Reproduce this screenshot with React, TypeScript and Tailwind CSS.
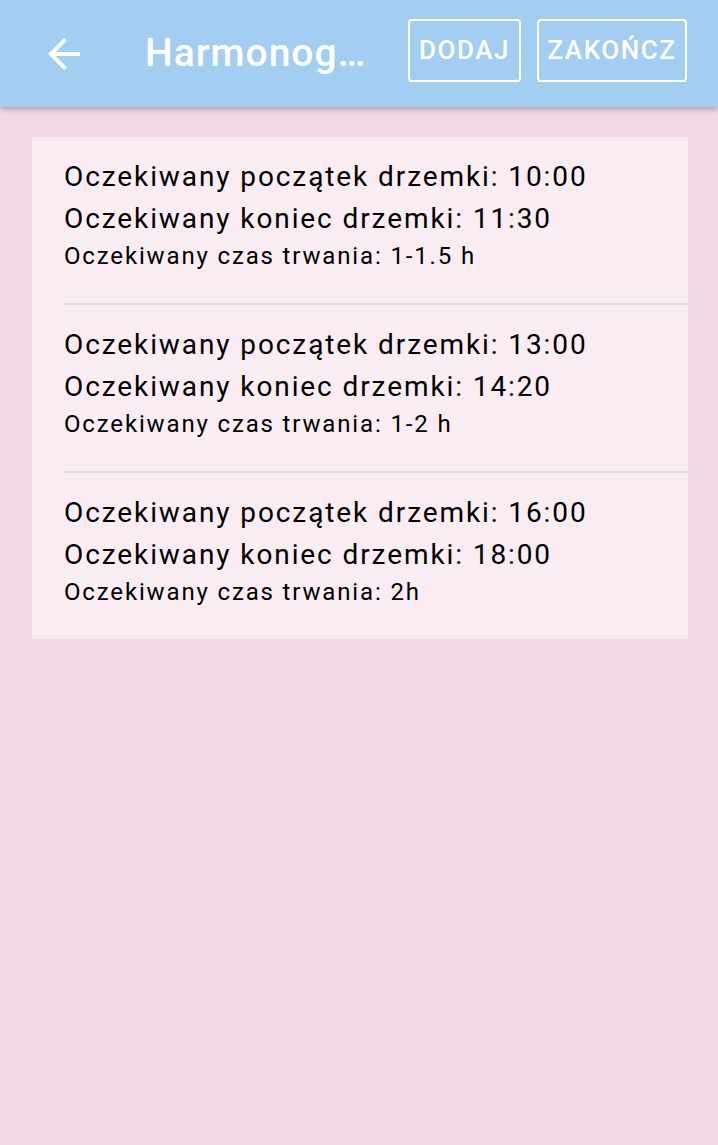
import React from "react";

const items = [
  { start: "10:00", end: "11:30", dur: "1-1.5 h" },
  { start: "13:00", end: "14:20", dur: "1-2 h" },
  { start: "16:00", end: "18:00", dur: "2h" },
];

export default function App() {
  return (
    <div
      className="min-h-[1145px] w-full bg-[#f1d6e6]"
      style={{ fontFamily: "Roboto, 'Noto Sans', sans-serif" }}
    >
      <header className="relative z-10 flex h-[107px] items-center bg-[#a3cef1] pl-[40px] pr-[31px] shadow-[0_2px_6px_rgba(0,0,0,0.28)]">
        <button className="flex h-[48px] w-[48px] shrink-0 items-center justify-center text-white">
          <svg width="48" height="48" viewBox="0 0 24 24" fill="currentColor">
            <path d="M20 11H7.83l5.59-5.59L12 4l-8 8 8 8 1.41-1.41L7.83 13H20v-2z" />
          </svg>
        </button>
        <h1 className="ml-[57px] w-[225px] shrink-0 truncate pb-[2px] text-[39px] font-medium leading-[50px] tracking-[0.026em] text-white">
          Harmonogram drzemek
        </h1>
        <div className="ml-auto flex gap-[16px] pb-[6px]">
          <button className="flex h-[63px] w-[113px] items-center justify-center rounded-[4px] border-2 border-white text-[26px] font-medium tracking-[0.06em] text-white">
            DODAJ
          </button>
          <button className="flex h-[63px] w-[150px] items-center justify-center rounded-[4px] border-2 border-white text-[26px] font-medium tracking-[0.06em] text-white">
            ZAKOŃCZ
          </button>
        </div>
      </header>
      <main className="pl-[32px] pr-[30px] pt-[30px]">
        <div className="bg-[#f9edf3] pl-[32px]">
          {items.map((it, i) => (
            <div
              key={i}
              className={
                i < items.length - 1
                  ? "border-b-2 border-[#e0dce0] pb-[31px] pt-[19px]"
                  : "pb-[31px] pt-[19px]"
              }
            >
              <div className="text-[28px] leading-[42px] tracking-[0.068em] text-black">
                Oczekiwany początek drzemki: {it.start}
              </div>
              <div className="text-[28px] leading-[42px] tracking-[0.068em] text-black">
                Oczekiwany koniec drzemki: {it.end}
              </div>
              <div className="text-[24px] leading-[32px] tracking-[0.077em] text-black">
                Oczekiwany czas trwania: {it.dur}
              </div>
            </div>
          ))}
        </div>
      </main>
    </div>
  );
}
